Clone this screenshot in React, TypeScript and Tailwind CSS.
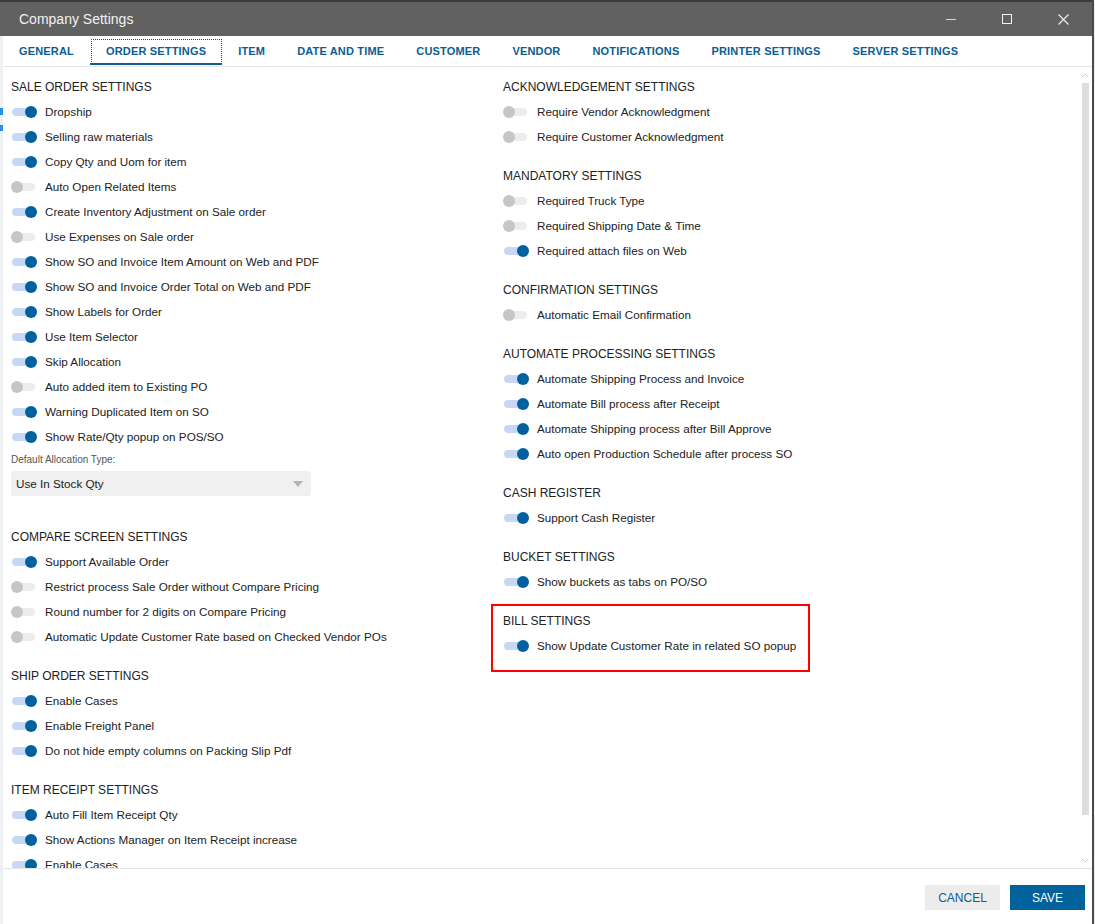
import React from 'react'

type Item = { label: string; on: boolean }
type Section = { title: string; items: Item[] }

const tabs = [
  'GENERAL',
  'ORDER SETTINGS',
  'ITEM',
  'DATE AND TIME',
  'CUSTOMER',
  'VENDOR',
  'NOTIFICATIONS',
  'PRINTER SETTINGS',
  'SERVER SETTINGS',
]

const on = (label: string): Item => ({ label, on: true })
const off = (label: string): Item => ({ label, on: false })

const saleOrder: Item[] = [
  on('Dropship'),
  on('Selling raw materials'),
  on('Copy Qty and Uom for item'),
  off('Auto Open Related Items'),
  on('Create Inventory Adjustment on Sale order'),
  off('Use Expenses on Sale order'),
  on('Show SO and Invoice Item Amount on Web and PDF'),
  on('Show SO and Invoice Order Total on Web and PDF'),
  on('Show Labels for Order'),
  on('Use Item Selector'),
  on('Skip Allocation'),
  off('Auto added item to Existing PO'),
  on('Warning Duplicated Item on SO'),
  on('Show Rate/Qty popup on POS/SO'),
]

const leftRest: Section[] = [
  {
    title: 'COMPARE SCREEN SETTINGS',
    items: [
      on('Support Available Order'),
      off('Restrict process Sale Order without Compare Pricing'),
      off('Round number for 2 digits on Compare Pricing'),
      off('Automatic Update Customer Rate based on Checked Vendor POs'),
    ],
  },
  {
    title: 'SHIP ORDER SETTINGS',
    items: [on('Enable Cases'), on('Enable Freight Panel'), on('Do not hide empty columns on Packing Slip Pdf')],
  },
  {
    title: 'ITEM RECEIPT SETTINGS',
    items: [
      on('Auto Fill Item Receipt Qty'),
      on('Show Actions Manager on Item Receipt increase'),
      on('Enable Cases'),
    ],
  },
]

const right: Section[] = [
  {
    title: 'ACKNOWLEDGEMENT SETTINGS',
    items: [off('Require Vendor Acknowledgment'), off('Require Customer Acknowledgment')],
  },
  {
    title: 'MANDATORY SETTINGS',
    items: [off('Required Truck Type'), off('Required Shipping Date & Time'), on('Required attach files on Web')],
  },
  { title: 'CONFIRMATION SETTINGS', items: [off('Automatic Email Confirmation')] },
  {
    title: 'AUTOMATE PROCESSING SETTINGS',
    items: [
      on('Automate Shipping Process and Invoice'),
      on('Automate Bill process after Receipt'),
      on('Automate Shipping process after Bill Approve'),
      on('Auto open Production Schedule after process SO'),
    ],
  },
  { title: 'CASH REGISTER', items: [on('Support Cash Register')] },
  { title: 'BUCKET SETTINGS', items: [on('Show buckets as tabs on PO/SO')] },
]

function Toggle({ on }: { on: boolean }) {
  return (
    <span className="relative block w-[26px] h-[12px] shrink-0">
      <span
        className={`absolute left-[1px] top-[2px] w-[23px] h-[8px] rounded-full ${on ? 'bg-[#c7d8f6]' : 'bg-[#ececec]'}`}
      />
      <span
        className={`absolute top-0 w-[12px] h-[12px] rounded-full ${on ? 'right-0 bg-[#00619e]' : 'left-0 bg-[#c6c6c6]'}`}
      />
    </span>
  )
}

function Row({ item }: { item: Item }) {
  return (
    <div className="h-[25px] flex items-center gap-[8px] whitespace-nowrap">
      <Toggle on={item.on} />
      <span className="text-[11.7px] text-[#222]">{item.label}</span>
    </div>
  )
}

function Header({ children }: { children: React.ReactNode }) {
  return (
    <div className="h-[25px] flex items-center pt-[1px] text-[12px] text-[#222] whitespace-nowrap">{children}</div>
  )
}

function Block({ section }: { section: Section }) {
  return (
    <div className="mt-[14px] first:mt-0">
      <Header>{section.title}</Header>
      {section.items.map((it, i) => (
        <Row key={i} item={it} />
      ))}
    </div>
  )
}

export default function App() {
  return (
    <div
      className="w-[1095px] h-[924px] overflow-hidden bg-[#eef0f2]"
      style={{ fontFamily: '"Liberation Sans", Arial, sans-serif' }}
    >
      <div className="w-[1094px] h-[924px] flex flex-col border-r-2 border-[#4a4a4a]">
        <div className="h-[2px] bg-[#3c3c3c]" />
        {/* title bar */}
        <div className="h-[34px] bg-[#616161] flex items-center pl-[19px] text-[#f2f2f2]">
          <span className="text-[14px] flex-1">Company Settings</span>
          <div className="flex items-center h-full">
            <span className="w-[58px] flex justify-center">
              <span className="block w-[10px] h-[1px] bg-[#d8d8d8]" />
            </span>
            <span className="w-[54px] flex justify-center">
              <span className="block w-[10px] h-[10px] border border-[#f2f2f2]" />
            </span>
            <span className="w-[58px] flex justify-center">
              <svg width="11" height="11" viewBox="0 0 11 11" stroke="#f2f2f2" strokeWidth="1.1">
                <path d="M0.5 0.5 L10.5 10.5 M10.5 0.5 L0.5 10.5" />
              </svg>
            </span>
          </div>
        </div>

        <div className="flex-1 flex min-h-0">
          {/* sliver of the app behind */}
          <div className="w-[3px] bg-[#eef0f2] flex flex-col">
            <span className="mt-[72px] h-[7px] bg-[#2a8ee8]" />
            <span className="mt-[10px] h-[6px] bg-[#2a8ee8]" />
          </div>

          <div className="flex-1 flex flex-col bg-white min-w-0">
            {/* tabs */}
            <div className="h-[31px] flex items-stretch border-b border-[#e6e6e6] text-[11px] tracking-[0.17px] font-bold text-[#0c5d91]">
              {tabs.map((t) => {
                const active = t === 'ORDER SETTINGS'
                return (
                  <div key={t} className="relative px-[16px] flex items-center pt-[1px] whitespace-nowrap">
                    {active && (
                      <>
                        <span className="absolute left-[1px] right-0 top-[3px] bottom-[2px] border border-dotted border-[#444]" />
                        <span className="absolute left-0 right-0 bottom-[1px] h-[2px] bg-[#0c5d91]" />
                      </>
                    )}
                    {t}
                  </div>
                )
              })}
            </div>

            {/* scroll area */}
            <div className="flex-1 flex min-h-0 overflow-hidden">
              <div className="flex-1 grid grid-cols-[492px_1fr] pt-[7px] overflow-hidden">
                <div className="pl-[8px]">
                  <Header>SALE ORDER SETTINGS</Header>
                  {saleOrder.map((it, i) => (
                    <Row key={i} item={it} />
                  ))}
                  <div className="mt-[4px] text-[10px] text-[#555] h-[14px] leading-[14px]">Default Allocation Type:</div>
                  <div className="mt-[4px] w-[300px] h-[25px] bg-[#f0f0f0] rounded-[3px] flex items-center justify-between pl-[5px] pr-[8px]">
                    <span className="text-[11.7px] text-[#222]">Use In Stock Qty</span>
                    <span className="block w-0 h-0 border-l-[5px] border-r-[5px] border-t-[6px] border-l-transparent border-r-transparent border-t-[#b4b4b4]" />
                  </div>
                  <div className="mt-[28px]">
                    {leftRest.map((s) => (
                      <Block key={s.title} section={s} />
                    ))}
                  </div>
                </div>
                <div className="pl-[8px]">
                  {right.map((s) => (
                    <Block key={s.title} section={s} />
                  ))}
                  <div className="relative mt-[14px]">
                    <span className="absolute -left-[12px] -top-[4px] w-[319px] h-[68px] border-2 border-[#ff0000]" />
                    <Header>BILL SETTINGS</Header>
                    <Row item={on('Show Update Customer Rate in related SO popup')} />
                  </div>
                </div>
              </div>

              {/* scrollbar */}
              <div className="w-[12px] flex flex-col items-center pr-[2px]">
                <svg className="mt-[6px]" width="8" height="5" viewBox="0 0 8 5" fill="none" stroke="#d0d0d0">
                  <path d="M0.5 4.5 L4 1 L7.5 4.5" />
                </svg>
                <span className="mt-[5px] w-[7px] h-[732px] bg-[#dedede]" />
                <span className="flex-1" />
                <svg className="mb-[5px]" width="8" height="5" viewBox="0 0 8 5" fill="none" stroke="#d0d0d0">
                  <path d="M0.5 0.5 L4 4 L7.5 0.5" />
                </svg>
              </div>
            </div>

            {/* footer */}
            <div className="h-[56px] border-t border-[#e4e4e4] flex items-start justify-end gap-[10px] pt-[16px] pr-[7px]">
              <button className="w-[75px] h-[25px] bg-[#ececec] text-[12px] text-[#0c5d91]">CANCEL</button>
              <button className="w-[75px] h-[25px] bg-[#00619b] text-[12px] text-white">SAVE</button>
            </div>
          </div>
        </div>
      </div>
    </div>
  )
}
